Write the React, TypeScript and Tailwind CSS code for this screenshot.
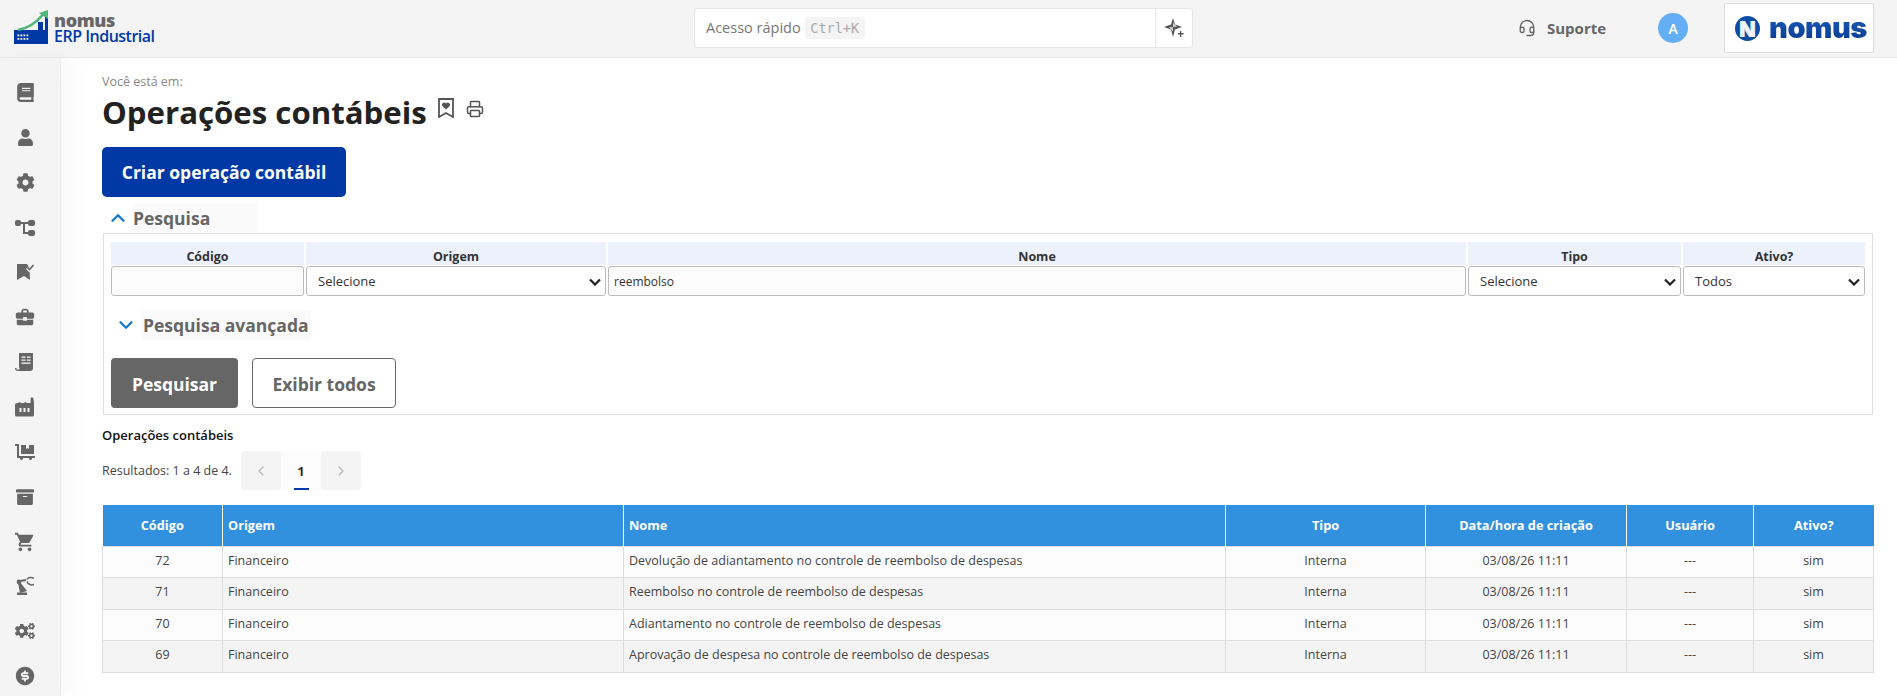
import React from "react";
import { FaBook, FaUser, FaCog, FaArchive, FaCogs, FaDollyFlatbed } from "react-icons/fa";
import { MdBusinessCenter, MdShoppingCart } from "react-icons/md";
import { RiMoneyDollarCircleFill } from "react-icons/ri";
import { Headset, Printer, ChevronUp, ChevronDown, ChevronLeft, ChevronRight } from "lucide-react";

const Tree = () => (
  <svg width="20" height="18" viewBox="0 0 20 18" fill="#666">
    <rect x="0" y="1" width="6" height="6" rx="2" />
    <rect x="13" y="1" width="7" height="6" rx="2" />
    <rect x="13" y="11" width="7" height="6" rx="2" />
    <path d="M5 3h9v2H10v8h4v2H8V5H5z" />
  </svg>
);
const BookmarkCheck = () => (
  <svg width="20" height="20" viewBox="0 0 20 20" fill="#666">
    <path d="M2 2h10l2.500 4.500L15 18l-6-4-7 4z" />
    <path d="M12 6l2 2 5-6" stroke="#f4f4f4" strokeWidth="3" fill="none" />
    <path d="M12.500 5.500l2 2 4-4.500" stroke="#666" strokeWidth="1.600" fill="none" />
  </svg>
);
const Receipt = () => (
  <svg width="20" height="20" viewBox="0 0 20 20" fill="#666">
    <path d="M4 1h14v15a3 3 0 0 1-3 3H3a3 3 0 0 1-3-3h4z" />
    <rect x="6.500" y="4.500" width="4" height="1.300" fill="#f4f4f4" />
    <rect x="12" y="4.500" width="3.500" height="1.300" fill="#f4f4f4" />
    <rect x="6.500" y="7.500" width="4" height="1.300" fill="#f4f4f4" />
    <rect x="12" y="7.500" width="3.500" height="1.300" fill="#f4f4f4" />
    <rect x="6.500" y="10.500" width="9" height="1.300" fill="#f4f4f4" />
    <path d="M1.500 15.500h3v2h-3z" fill="#f4f4f4" />
  </svg>
);
const Factory = () => (
  <svg width="20" height="20" viewBox="0 0 20 20" fill="#666">
    <path d="M0 8a2 2 0 0 1 2-2h1l1.500-1L6 6h3l1.500-1L12 6h3.500V1.500L17 0l1.500 1.500L19 6v12a1.500 1.500 0 0 1-1.500 1.500h-16A1.500 1.500 0 0 1 0 18z" />
    <rect x="4.500" y="11" width="2" height="4" fill="#f4f4f4" />
    <rect x="8.500" y="11" width="2" height="4" fill="#f4f4f4" />
    <rect x="12.500" y="11" width="2" height="4" fill="#f4f4f4" />
  </svg>
);
const Robot = () => (
  <svg width="20" height="20" viewBox="0 0 20 20" fill="none" stroke="#666">
    <path d="M2 19h10v-2.500H2z" fill="#666" stroke="none" />
    <path d="M5 17 3 7l2-1 7 9z" fill="#666" stroke="none" />
    <circle cx="4" cy="6" r="2.400" fill="#666" stroke="none" />
    <path d="M5 5l6-1" strokeWidth="2" />
    <path d="M19 2.500c-3-2-6-1-7 1M19 8.500c-3 1-6 0-7-3" strokeWidth="1.500" />
  </svg>
);
const Star = () => (
  <svg width="20" height="20" viewBox="0 0 20 20" fill="#555">
    <path d="M9 0l2 6.500L18 9l-7 2.500L9 19l-2-7.500L0 9l7-2.500z" />
    <path d="M9 4.500v4.500l4-.2zM9 13.500V9l-4 .2z" fill="#fff" opacity=".7" />
    <path d="M16 13h1.300v2H19.500v1.400h-2.200V19H16v-2.600h-2V15h2z" />
  </svg>
);
const BookmarkHeart = () => (
  <svg width="16" height="20" viewBox="0 0 16 20" fill="none">
    <path d="M1 1h14v18l-7-4-7 4z" stroke="#555" strokeWidth="1.800" />
    <path d="M8 11.500 4.300 8a2.200 2.200 0 0 1 3.700-2.500A2.200 2.200 0 0 1 11.700 8z" fill="#555" />
  </svg>
);
const Logo = () => (
  <svg width="36" height="36" viewBox="0 0 36 36" className="mr-[4px]">
    <rect x="0" y="20" width="34" height="14" fill="#0039a6" />
    <rect x="24" y="12" width="5" height="9" fill="#0039a6" />
    <rect x="31" y="7" width="3" height="14" fill="#0039a6" />
    <path d="M4 20C14 18 23 12 29 4.500" stroke="#4fb477" strokeWidth="2.600" fill="none" />
    <path d="M25 3l9-3v9z" fill="#4fb477" />
    {[3, 6, 9, 12].map((x) =>
      [24.5, 28].map((y) => <rect key={`${x}-${y}`} x={x + 0.5} y={y} width="1.800" height="1.800" fill="#fff" />)
    )}
  </svg>
);

const sideIcons = [
  <FaBook size={19} color="#666" />,
  <FaUser size={17} color="#666" />,
  <FaCog size={19} color="#666" />,
  <Tree />,
  <BookmarkCheck />,
  <MdBusinessCenter size={22} color="#666" />,
  <Receipt />,
  <Factory />,
  <FaDollyFlatbed size={20} color="#666" />,
  <FaArchive size={18} color="#666" />,
  <MdShoppingCart size={22} color="#666" />,
  <Robot />,
  <FaCogs size={20} color="#666" />,
  <RiMoneyDollarCircleFill size={22} color="#666" />,
];

const rows = [
  ["72", "Devolução de adiantamento no controle de reembolso de despesas"],
  ["71", "Reembolso no controle de reembolso de despesas"],
  ["70", "Adiantamento no controle de reembolso de despesas"],
  ["69", "Aprovação de despesa no controle de reembolso de despesas"],
];

const filterHead = "h-[23px] bg-[#ecf1fb] text-center text-[12.5px] leading-[29px] font-bold text-[#333]";
const inputCls = "h-[30px] w-full rounded-[3px] border border-[#bbb] bg-[#fcfcfc] px-[5px] text-[12px] text-[#333]";

const Select = ({ label }: { label: string }) => (
  <div className="relative pt-[1px]">
    <select className="h-[30px] w-full appearance-none rounded-[3px] border border-[#bbb] bg-white pt-[1px] pl-[11px] text-[13px] text-[#333]">
      <option>{label}</option>
    </select>
    <svg width="12" height="8" viewBox="0 0 12 8" fill="none" className="pointer-events-none absolute top-[13px] right-[5px]">
      <path d="M1 1.500l5 5 5-5" stroke="#222" strokeWidth="2.200" />
    </svg>
  </div>
);

export default function App() {
  return (
    <div className="h-[696px] w-[1897px] overflow-hidden bg-white font-['Open_Sans',sans-serif] text-[#333]">
      <header className="flex h-[58px] items-center border-b border-[#e8e8e8] bg-[#f4f4f4] pb-[1px]">
        <div className="flex w-[694px] items-center pl-[14px]">
          <Logo />
          <div className="flex flex-col">
            <span className="text-[18px] leading-[16px] font-extrabold tracking-[-0.4px] text-[#666]">nomus</span>
            <span className="text-[16px] leading-[17px] font-semibold tracking-[-0.5px] text-[#0039a6]">ERP Industrial</span>
          </div>
        </div>
        <div className="flex h-[40px] w-[499px] items-center rounded-[4px] border border-[#e6e6e6] bg-white">
          <div className="flex flex-1 items-center pl-[11px]">
            <span className="text-[14.5px] text-[#777]">Acesso rápido</span>
            <span className="ml-[4px] flex h-[22px] w-[60px] items-center justify-center rounded-[3px] bg-[#f4f4f4] font-['DejaVu_Sans_Mono',monospace] text-[13.5px] text-[#aaa]">Ctrl+K</span>
          </div>
          <div className="flex h-full w-[37px] items-center justify-center border-l border-[#e6e6e6]">
            <Star />
          </div>
        </div>
        <div className="ml-[325px] flex items-center">
          <Headset size={18} color="#666" strokeWidth={1.8} />
          <span className="ml-[11px] text-[15px] font-bold text-[#666]">Suporte</span>
        </div>
        <div className="ml-[52px] flex h-[30px] w-[30px] items-center justify-center rounded-full bg-[#64aef5] text-[14px] font-semibold text-white">A</div>
        <div className="ml-[36px] flex h-[50px] w-[150px] items-center rounded-[1px] border border-[#ddd] bg-white pl-[10px]">
          <svg width="25" height="25" viewBox="0 0 25 25">
            <circle cx="12.500" cy="12.500" r="12.500" fill="#0d4da6" />
            <path d="M7 4l11 17h-4L7 10z" fill="#c9d6e6" />
            <text x="12.500" y="20.500" textAnchor="middle" fontSize="22" fontWeight="900" fontFamily="Inter" fill="#eef3f9">N</text>
          </svg>
          <span className="ml-[9px] bg-gradient-to-b from-[#1a5fb8] to-[#0b3a90] bg-clip-text font-['Inter',sans-serif] text-[29px] leading-[30px] font-black tracking-[-0.5px] text-transparent">nomus</span>
        </div>
      </header>
      <div className="flex h-[638px]">
        <aside className="relative z-10 flex w-[61px] flex-col items-center gap-[5px] border-r border-[#ececec] bg-[#f4f4f4] pt-[15px] pr-[10px] shadow-[10px_0_24px_rgba(0,0,0,0.035)]">
          {sideIcons.map((icon, i) => (
            <div key={i} className="flex h-[40px] w-[24px] items-center justify-center">{icon}</div>
          ))}
        </aside>
        <main className="min-w-0 flex-1 pt-[15px] pr-[24px] pl-[41px]">
          <div className="h-[18px] text-[12.5px] leading-[18px] text-[#888]">Você está em:</div>
          <div className="flex h-[42px] items-center">
            <h1 className="text-[31.2px] leading-[42px] font-bold text-[#222]">Operações contábeis</h1>
            <span className="mb-[8px] ml-[11px]"><BookmarkHeart /></span>
            <Printer size={18} color="#555" strokeWidth={2} className="mb-[6px] ml-[12px]" />
          </div>
          <button className="mt-[14px] h-[50px] w-[244px] rounded-[5px] bg-[#0039a6] text-[17.5px] font-bold text-white">Criar operação contábil</button>
          <div className="mt-[6px] flex h-[29px] items-center">
            <ChevronUp size={22} color="#1878d0" strokeWidth={2.6} className="ml-[5px]" />
            <span className="ml-[4px] h-[29px] bg-[#fafafa] pr-[47px] text-[17.5px] leading-[31px] font-bold text-[#666]">Pesquisa</span>
          </div>
          <section className="mt-[1px] ml-[1px] h-[182px] border border-[#e0e0e0] px-[7px] pt-[8px]">
            <div className="grid grid-cols-[193px_300px_858px_213px_182px] gap-x-[2px]">
              {["Código", "Origem", "Nome", "Tipo", "Ativo?"].map((h) => (
                <div key={h} className={filterHead}>{h}</div>
              ))}
              <div className="pt-[1px]"><input className={inputCls} /></div>
              <Select label="Selecione" />
              <div className="pt-[1px]"><input className={inputCls} defaultValue="reembolso" /></div>
              <Select label="Selecione" />
              <Select label="Todos" />
            </div>
            <div className="mt-[14px] flex h-[30px] items-center">
              <ChevronDown size={22} color="#1878d0" strokeWidth={2.6} className="ml-[4px]" />
              <span className="ml-[4px] bg-[#fafafa] px-[2px] text-[17.5px] leading-[30px] font-bold text-[#666]">Pesquisa avançada</span>
            </div>
            <div className="mt-[18px] flex gap-[14px]">
              <button className="h-[50px] w-[127px] rounded-[4px] bg-[#666] pt-[2px] text-[17.5px] font-bold text-white">Pesquisar</button>
              <button className="h-[50px] w-[144px] rounded-[4px] border border-[#666] bg-white pt-[2px] text-[17.5px] font-bold text-[#666]">Exibir todos</button>
            </div>
          </section>
          <div className="mt-[11px] h-[18px] text-[13px] leading-[18px] font-semibold text-[#111]">Operações contábeis</div>
          <div className="mt-[7px] flex h-[39px] items-center text-[12.5px]">
            <span className="w-[139px] pt-[2px] text-[#444]">Resultados: 1 a 4 de 4.</span>
            <span className="flex h-full w-[40px] items-center justify-center rounded-[4px] bg-[#f4f4f4]"><ChevronLeft size={16} color="#bbb" /></span>
            <span className="flex h-full w-[40px] flex-col items-center justify-end bg-[#fcfcfc]">
              <span className="mb-[7px] text-[13px] font-bold text-[#333]">1</span>
              <span className="h-[2px] w-[15px] bg-[#0039a6]" />
            </span>
            <span className="flex h-full w-[40px] items-center justify-center rounded-[4px] bg-[#f4f4f4]"><ChevronRight size={16} color="#bbb" /></span>
          </div>
          <table className="mt-[15px] w-[1771px] table-fixed border-collapse text-[12.5px]">
            <colgroup>
              <col className="w-[120px]" />
              <col className="w-[401px]" />
              <col className="w-[602px]" />
              <col className="w-[200px]" />
              <col className="w-[201px]" />
              <col className="w-[127px]" />
              <col className="w-[120px]" />
            </colgroup>
            <thead>
              <tr className="h-[41px] bg-[#3291df] text-[12.75px] font-bold text-white">
                <th className="border-r border-white">Código</th>
                <th className="border-r border-white pl-[5px] text-left">Origem</th>
                <th className="border-r border-white pl-[5px] text-left">Nome</th>
                <th className="border-r border-white">Tipo</th>
                <th className="border-r border-white">Data/hora de criação</th>
                <th className="border-r border-white">Usuário</th>
                <th>Ativo?</th>
              </tr>
            </thead>
            <tbody>
              {rows.map(([code, name], i) => (
                <tr key={code} className={(i % 2 ? "h-[32px] bg-[#f4f4f4]" : "h-[31px] bg-[#fcfcfc]") + " text-[#444]"}>
                  <td className="border border-[#ddd] pb-[1px] text-center">{code}</td>
                  <td className="border border-[#ddd] pb-[1px] pl-[5px]">Financeiro</td>
                  <td className="border border-[#ddd] pb-[1px] pl-[5px]">{name}</td>
                  <td className="border border-[#ddd] pb-[1px] text-center">Interna</td>
                  <td className="border border-[#ddd] pb-[1px] text-center">03/08/26 11:11</td>
                  <td className="border border-[#ddd] pb-[1px] text-center">---</td>
                  <td className="border border-[#ddd] pb-[1px] text-center">sim</td>
                </tr>
              ))}
            </tbody>
          </table>
        </main>
      </div>
    </div>
  );
}
